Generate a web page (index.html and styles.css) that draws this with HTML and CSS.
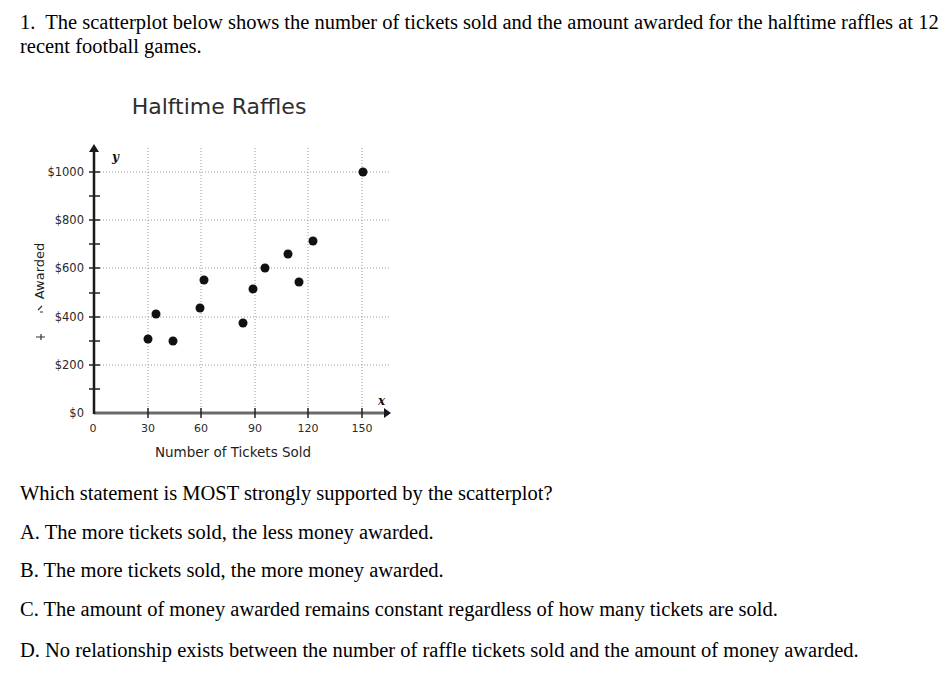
FILE: index.html
```html
<!DOCTYPE html>
<html>
<head>
<meta charset="utf-8">
<link rel="stylesheet" href="styles.css">
</head>
<body>
<div class="page">
  <p class="question">1.&nbsp; The scatterplot below shows the number of tickets sold and the amount awarded for the halftime raffles at 12 recent football games.</p>
  <svg class="chart" width="430" height="410" viewBox="0 60 430 410" xmlns="http://www.w3.org/2000/svg">
    <text class="title" x="219" y="114" text-anchor="middle">Halftime Raffles</text>
    <g class="grid">
      <line x1="94" y1="172" x2="390" y2="172"/>
      <line x1="94" y1="220" x2="390" y2="220"/>
      <line x1="94" y1="268" x2="390" y2="268"/>
      <line x1="94" y1="317" x2="390" y2="317"/>
      <line x1="94" y1="365" x2="390" y2="365"/>
      <line x1="148" y1="148" x2="148" y2="413"/>
      <line x1="201" y1="148" x2="201" y2="413"/>
      <line x1="255" y1="148" x2="255" y2="413"/>
      <line x1="308" y1="148" x2="308" y2="413"/>
      <line x1="362" y1="148" x2="362" y2="413"/>
    </g>
    <line class="xaxis" x1="94" y1="413" x2="386" y2="413"/>
    <path class="arrow" d="M384 408 L391 413 L384 418 Z"/>
    <line class="yaxis" x1="94" y1="414" x2="94" y2="150"/>
    <path class="arrow" d="M89 152 L94 144 L99 152 Z"/>
    <g class="ticks">
      <line x1="89" y1="389" x2="100" y2="389"/>
      <line x1="89" y1="365" x2="100" y2="365"/>
      <line x1="89" y1="341" x2="100" y2="341"/>
      <line x1="89" y1="317" x2="100" y2="317"/>
      <line x1="89" y1="293" x2="100" y2="293"/>
      <line x1="89" y1="268" x2="100" y2="268"/>
      <line x1="89" y1="244" x2="100" y2="244"/>
      <line x1="89" y1="220" x2="100" y2="220"/>
      <line x1="89" y1="196" x2="100" y2="196"/>
      <line x1="89" y1="172" x2="100" y2="172"/>
      <line x1="148" y1="408" x2="148" y2="418"/>
      <line x1="201" y1="408" x2="201" y2="418"/>
      <line x1="255" y1="408" x2="255" y2="418"/>
      <line x1="308" y1="408" x2="308" y2="418"/>
      <line x1="362" y1="408" x2="362" y2="418"/>
    </g>
    <text class="axisvar" x="112" y="161">y</text>
    <text class="axisvar" x="378" y="405">x</text>
    <g class="ylabels">
      <text x="84" y="176">$1000</text>
      <text x="84" y="224">$800</text>
      <text x="84" y="272">$600</text>
      <text x="84" y="321">$400</text>
      <text x="84" y="369">$200</text>
      <text x="84" y="417">$0</text>
    </g>
    <g class="xlabels">
      <text x="93" y="432">0</text>
      <text x="148" y="432">30</text>
      <text x="201" y="432">60</text>
      <text x="255" y="432">90</text>
      <text x="308" y="432">120</text>
      <text x="362" y="432">150</text>
    </g>
    <text class="axistitle" x="233" y="457" text-anchor="middle">Number of Tickets Sold</text>
    <text class="axistitle ylabel" transform="translate(44 271) rotate(-90)" text-anchor="middle">Awarded</text>
    <path class="mark" d="M36 337 H45 M41 334 V340 M38 310 L42 306 M40 312 H43"/>
    <g class="dots">
      <circle cx="148" cy="339" r="4.5"/>
      <circle cx="156" cy="314" r="4.5"/>
      <circle cx="173" cy="341" r="4.5"/>
      <circle cx="204" cy="280" r="4.5"/>
      <circle cx="200" cy="308" r="4.5"/>
      <circle cx="243" cy="323" r="4.5"/>
      <circle cx="253" cy="289" r="4.5"/>
      <circle cx="265" cy="268" r="4.5"/>
      <circle cx="288" cy="254" r="4.5"/>
      <circle cx="299" cy="282" r="4.5"/>
      <circle cx="313" cy="241" r="4.5"/>
      <circle cx="363" cy="172" r="4.5"/>
    </g>
  </svg>
  <p class="prompt">Which statement is MOST strongly supported by the scatterplot?</p>
  <ul class="choices">
    <li>A. The more tickets sold, the less money awarded.</li>
    <li>B. The more tickets sold, the more money awarded.</li>
    <li>C. The amount of money awarded remains constant regardless of how many tickets are sold.</li>
    <li>D. No relationship exists between the number of raffle tickets sold and the amount of money awarded.</li>
  </ul>
</div>
</body>
</html>
```
FILE: styles.css
```css
html, body {
  margin: 0;
  padding: 0;
  background: #ffffff;
}
.page {
  padding: 10px 0 0 20px;
  font-family: "Liberation Serif", "Times New Roman", serif;
  font-size: 20.5px;
  line-height: 24px;
  color: #000;
}
.question {
  margin: 0;
  width: 924px;
}
.chart {
  display: block;
  margin: 2px 0 0 -20px;
}
.title {
  font-family: "DejaVu Sans", sans-serif;
  font-size: 22px;
  fill: #2e2e2e;
}
.grid line {
  stroke: #9a9a9a;
  stroke-width: 1;
  stroke-dasharray: 1 2;
}
.xaxis {
  stroke: #6a6a6a;
  stroke-width: 3;
}
.yaxis {
  stroke: #1a1a1a;
  stroke-width: 2.5;
}
.arrow {
  fill: #1a1a1a;
}
.ticks line {
  stroke: #222;
  stroke-width: 1.5;
}
.axisvar {
  font-family: "DejaVu Serif", serif;
  font-style: italic;
  font-weight: bold;
  font-size: 12px;
  fill: #111;
}
.ylabels text {
  font-family: "DejaVu Sans", sans-serif;
  font-size: 11.5px;
  fill: #2a2a2a;
  text-anchor: end;
}
.xlabels text {
  font-family: "DejaVu Sans", sans-serif;
  font-size: 11px;
  fill: #2a2a2a;
  text-anchor: middle;
}
.axistitle {
  font-family: "DejaVu Sans", sans-serif;
  font-size: 13.5px;
  fill: #1e1e1e;
}
.ylabel {
  font-size: 13px;
}
.mark {
  stroke: #333;
  stroke-width: 1.2;
  fill: none;
}
.dots circle {
  fill: #111;
}
.prompt {
  margin: 11px 0 0 0;
}
.choices {
  list-style: none;
  margin: 0;
  padding: 0;
}
.choices li {
  margin-top: 14.5px;
}
.choices li:last-child {
  margin-top: 17.5px;
}
```
